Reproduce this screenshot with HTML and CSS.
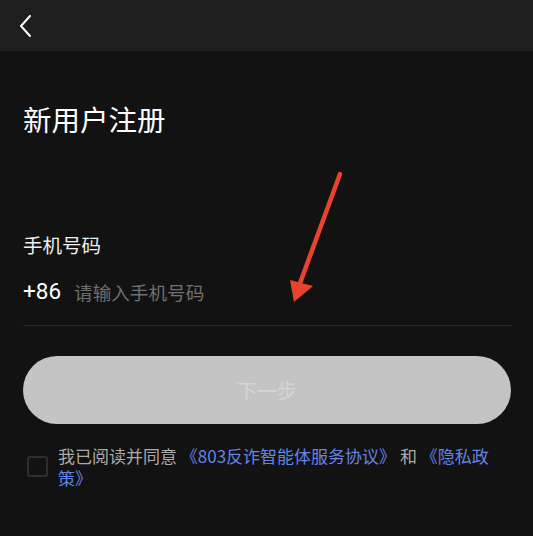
FILE: index.html
```html
<!DOCTYPE html>
<html lang="zh-CN">
<head>
    <meta charset="UTF-8">
    <meta name="viewport" content="width=device-width, initial-scale=1.0">
    <title>新用户注册</title>
    <link rel="stylesheet" href="styles.css">
</head>
<body>
    <div class="page">
        <div class="top-bar">
            <button class="back-btn" aria-label="返回">
                <svg width="16" height="24" viewBox="0 0 16 24">
                    <path d="M12 2 L3 12 L12 22" fill="none" stroke="#fff" stroke-width="2" stroke-linecap="round" stroke-linejoin="round"/>
                </svg>
            </button>
        </div>

        <div class="content">
            <h1 class="title">新用户注册</h1>

            <div class="field">
                <div class="field-label">手机号码</div>
                <div class="phone-row">
                    <span class="area-code">+86</span>
                    <span class="placeholder">请输入手机号码</span>
                </div>
            </div>

            <button class="next-btn" disabled>下一步</button>

            <div class="agree">
                <span class="checkbox"></span>
                <p class="agree-text">我已阅读并同意 <a href="#">《803反诈智能体服务协议》</a> 和 <a href="#">《隐私政策》</a></p>
            </div>
        </div>

        <svg class="hint-arrow" width="533" height="536" viewBox="0 0 533 536">
            <line x1="340" y1="174" x2="299" y2="286" stroke="#e8432e" stroke-width="4.5" stroke-linecap="round"/>
            <polygon points="290,280 313,286 294,302" fill="#e8432e"/>
        </svg>
    </div>
</body>
</html>
```

FILE: styles.css
```css
body {
    margin: 0;
    background: #121212;
    font-family: "Noto Sans CJK SC", "Noto Sans", sans-serif;
    color: #fff;
}

.page {
    position: relative;
    width: 533px;
    height: 536px;
    overflow: hidden;
}

.top-bar {
    height: 51px;
    background: #1e1e1e;
    display: flex;
    align-items: center;
    padding-left: 18px;
}

.back-btn {
    background: none;
    border: 0;
    padding: 0;
    display: flex;
    cursor: pointer;
}

.content {
    padding: 0 22px 0 23px;
}

.title {
    margin: 48px 0 0;
    font-size: 28.5px;
    font-weight: 400;
    line-height: 40px;
}

.field {
    margin-top: 93px;
    border-bottom: 1px solid #2a2a2a;
}

.field-label {
    font-size: 19.5px;
    line-height: 26px;
    color: #eee;
}

.phone-row {
    display: flex;
    align-items: center;
    gap: 13px;
    height: 66px;
    padding-bottom: 1px;
}

.area-code {
    font-family: "Roboto", "Noto Sans", sans-serif;
    font-size: 22.5px;
    color: #fff;
}

.placeholder {
    font-size: 18.6px;
    color: #6f6f6f;
}

.next-btn {
    display: block;
    width: 100%;
    height: 68px;
    margin-top: 30px;
    border: 0;
    border-radius: 34px;
    background: #c4c4c4;
    color: #d6d6d6;
    font-family: inherit;
    font-size: 20px;
}

.agree {
    display: flex;
    align-items: flex-start;
    gap: 10px;
    margin-top: 21px;
    padding-left: 4px;
    padding-right: 12px;
}

.checkbox {
    flex: none;
    width: 17px;
    height: 17px;
    margin-top: 11px;
    border: 2px solid #2e2e2e;
    border-radius: 3px;
}

.agree-text {
    margin: 0;
    font-size: 17px;
    line-height: 22px;
    color: #ababab;
}

.agree-text a {
    color: #6284e4;
    text-decoration: none;
}

.hint-arrow {
    position: absolute;
    left: 0;
    top: 0;
    pointer-events: none;
}
```
